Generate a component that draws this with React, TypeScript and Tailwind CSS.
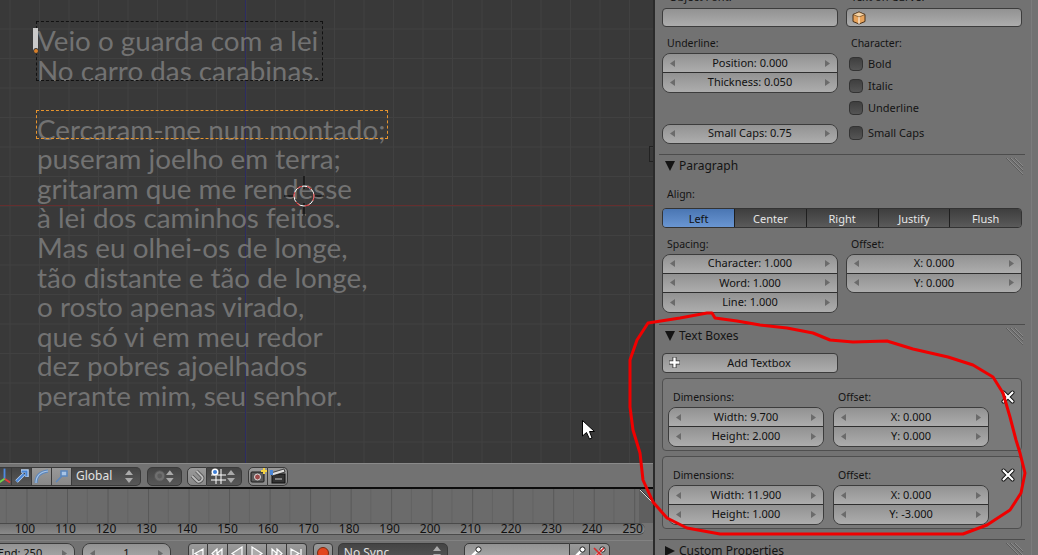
const poem = [
  "Veio o guarda com a lei",
  "No carro das carabinas.",
  "\u00a0",
  "Cercaram-me num montado;",
  "puseram joelho em terra;",
  "gritaram que me rendesse",
  "à lei dos caminhos feitos.",
  "Mas eu olhei-os de longe,",
  "tão distante e tão de longe,",
  "o rosto apenas virado,",
  "que só vi em meu redor",
  "dez pobres ajoelhados",
  "perante mim, seu senhor.",
];

const frames = [100, 110, 120, 130, 140, 150, 160, 170, 180, 190, 200, 210, 220, 230, 240, 250];

const scribble =
  "M712 313L715 318L737 321L760 325L787 328L813 333L830 340L853 342L887 341L913 349L948 357L973 365L993 377L1003 393L1010 417L1016 440L1020 453L1025 473L1021 493L1010 510L987 525L963 534L887 534L787 534L720 534L687 528L667 518L653 502L643 480L640 453L633 430L630 407L630 360L637 340L648 323L680 318L707 313Z";

function Arrow({ dir }: { dir: "l" | "r" }) {
  return (
    <svg width="5" height="7" viewBox="0 0 5 7" className="shrink-0">
      <polygon points={dir === "l" ? "5,0 5,7 0,3.5" : "0,0 0,7 5,3.5"} fill="#6b6b6b" />
    </svg>
  );
}

function NumStack({ rows }: { rows: string[] }) {
  return (
    <div className="rounded-[8px] border border-[#3c3c3c] overflow-hidden">
      {rows.map((r, i) => (
        <div
          key={r}
          className={`flex items-center justify-between px-[7px] bg-linear-to-b from-[#929292] to-[#adadad] ${
            i > 0 ? "h-[19.5px] border-t border-[#2e2e2e]" : "h-[18px]"
          }`}
        >
          <Arrow dir="l" />
          <span className="text-[#111]">{r}</span>
          <Arrow dir="r" />
        </div>
      ))}
    </div>
  );
}

function Label({ children, className }: { children: string; className: string }) {
  return <div className={`leading-[14px] pl-[5px] text-[10.5px] text-[#141414] ${className}`}>{children}</div>;
}

function Check({ label, className }: { label: string; className: string }) {
  return (
    <div className={`h-[14px] flex items-center pl-[3px] ${className}`}>
      <span className="w-[14px] h-[14px] rounded-[4px] border border-[#333] bg-linear-to-b from-[#3f3f3f] to-[#555]" />
      <span className="ml-[5px] pt-[1px] text-[#141414]">{label}</span>
    </div>
  );
}

function Grip() {
  return (
    <svg width="17" height="17" viewBox="0 0 17 17" className="absolute right-[2px] top-[3px]">
      {[0, 4, 8].map((d) => (
        <g key={d}>
          <line x1={d} y1="0" x2="17" y2={17 - d} stroke="#5c5c5c" />
          <line x1={d + 1} y1="0" x2="17" y2={16 - d} stroke="#8a8a8a" />
        </g>
      ))}
    </svg>
  );
}

function PanelHeader({ title, open = true, className }: { title: string; open?: boolean; className: string }) {
  return (
    <div className={`relative -mx-[3px] h-[23px] border-t border-[#4c4c4c] flex items-center pl-[6px] ${className}`}>
      <svg width="10" height="10" viewBox="0 0 10 10">
        {open ? <polygon points="0,0 10,0 5,10" fill="#141414" /> : <polygon points="0,0 10,5 0,10" fill="#141414" />}
      </svg>
      <span className="ml-[4px] text-[12px] text-[#141414]">{title}</span>
      <Grip />
    </div>
  );
}

function CloseX() {
  return (
    <svg width="14" height="14" viewBox="0 0 14 14" className="ml-[12px] shrink-0">
      <path d="M2.5 2.5L11.5 11.5M11.5 2.5L2.5 11.5" stroke="#111" strokeWidth="4" strokeLinecap="round" />
      <path d="M2.5 2.5L11.5 11.5M11.5 2.5L2.5 11.5" stroke="#fff" strokeWidth="2.2" strokeLinecap="round" />
    </svg>
  );
}

function TextBoxCard({ w, h, y }: { w: string; h: string; y: string }) {
  return (
    <div className="h-[73px] mt-[5px] rounded-[4px] border border-[#4f4f4f] bg-[#797979] px-[5px] pt-[11px] flex">
      <div className="w-[156px]">
        <Label className="h-[17px]">Dimensions:</Label>
        <NumStack rows={[`Width: ${w}`, `Height: ${h}`]} />
      </div>
      <div className="w-[156px] ml-[9px]">
        <Label className="h-[17px]">Offset:</Label>
        <NumStack rows={["X: 0.000", `Y: ${y}`]} />
      </div>
      <CloseX />
    </div>
  );
}

function ToolBtn({
  light,
  className = "",
  children,
}: {
  light?: boolean;
  className?: string;
  children?: React.ReactNode;
}) {
  return (
    <div
      className={`h-[19px] flex items-center border-y border-r border-[#3a3a3a] ${
        light ? "bg-linear-to-b from-[#999] to-[#888]" : "bg-linear-to-b from-[#444] to-[#585858]"
      } ${className}`}
    >
      {children}
    </div>
  );
}

function UpDown() {
  return (
    <svg width="8" height="13" viewBox="0 0 8 13">
      <polygon points="4,0 8,5 0,5" fill="#aaa" />
      <polygon points="0,8 8,8 4,13" fill="#aaa" />
    </svg>
  );
}

function Transport({ d }: { d: string }) {
  return (
    <ToolBtn light className="w-[19.8px] justify-center first:rounded-l-[4px] first:border-l last:rounded-r-[4px]">
      <svg width="14" height="14" viewBox="0 0 14 14">
        <path d={d} fill="#aaa" stroke="#fff" strokeWidth="1.2" />
      </svg>
    </ToolBtn>
  );
}

function Wrench() {
  return (
    <svg width="14" height="14" viewBox="0 0 14 14">
      <path d="M1 13L3 11L9 5" stroke="#fff" strokeWidth="2.5" />
      <circle cx="10.5" cy="3.5" r="2.6" fill="#fff" stroke="#222" />
      <path d="M1 13L3 11" stroke="#222" strokeWidth="1" />
    </svg>
  );
}

export default function App() {
  return (
    <div className="relative w-[1038px] h-[555px] overflow-hidden flex bg-[#727272] font-['Noto_Sans',sans-serif] text-[11px]">
      {/* left side: viewport and timeline */}
      <div className="w-[653px] shrink-0 flex flex-col">
        <div className="relative h-[463px] overflow-hidden bg-[#393939] bg-[linear-gradient(#414141_1px,transparent_1px),linear-gradient(90deg,#414141_1px,transparent_1px)] bg-size-[29.5px_29.5px] bg-position-[9.5px_28.5px]">
          <div className="absolute left-[245px] top-0 bottom-0 w-px bg-[#2c2c63]" />
          <div className="absolute left-0 right-0 top-[205px] h-px bg-[#652e2e]" />

          <div className="relative pl-[37px] pt-[26px] font-['Lato',sans-serif] text-[27.8px] leading-[29.58px] text-[#727272] whitespace-nowrap">
            {poem.map((line) => (
              <div key={line}>{line}</div>
            ))}
          </div>

          {/* text boxes and cursors on the canvas */}
          <div className="absolute left-[36px] top-[21px] w-[287px] h-[60px] border border-dashed border-[#111]" />
          <div className="absolute left-[36px] top-[110px] w-[352px] h-[29px] border border-dashed border-[#e8952e]" />
          <div className="absolute left-[33px] top-[28px] w-[5px] h-[23px] bg-[#c9c9c9]" />
          <div className="absolute left-[33px] top-[48px] w-[6px] h-[6px] rounded-full bg-[#d9802a] border border-[#333]" />
          <div className="absolute left-[649px] top-[146px] w-[6px] h-[16px] border border-[#222]" />
          <svg width="42" height="42" viewBox="0 0 42 42" className="absolute left-[283px] top-[175px]">
            <path d="M21 1V14M21 28V41M1 21H11M31 21H41" stroke="#000" />
            <circle cx="21" cy="21" r="10" fill="none" stroke="#fff" />
            <circle cx="21" cy="21" r="10" fill="none" stroke="#d32222" strokeDasharray="5 5" />
          </svg>
          <svg width="16" height="22" viewBox="0 0 16 22" className="absolute left-[581px] top-[419px]">
            <path d="M1.5 1.5V17L5.5 13.5L8.5 20L11 19L8.5 12.5L13.5 12.5Z" fill="#fff" stroke="#000" />
          </svg>
        </div>

        {/* 3d view header */}
        <div className="h-[26px] shrink-0 border-t border-[#8a8a8a] border-b-2 border-b-[#0c0c0c] bg-[#727272] flex items-center pt-[1px]">
          <ToolBtn className="w-[20px] -ml-[8px] pl-[6px] justify-center">
            <svg width="14" height="17" viewBox="0 0 14 17">
              <path d="M7 0V11" stroke="#4f8ae0" strokeWidth="2" />
              <path d="M7 11L13 15" stroke="#e23a3a" strokeWidth="2" />
              <path d="M7 11L1 15" stroke="#6fd34a" strokeWidth="2" />
            </svg>
          </ToolBtn>
          <ToolBtn className="w-[20px] justify-center">
            <svg width="14" height="14" viewBox="0 0 14 14">
              <path d="M1.5 12.5L9 5M6 2H12V8" fill="none" stroke="#bcd4f2" strokeWidth="3.5" />
              <path d="M1.5 12.5L9 5M6.5 2.5H11.5V7.5" fill="none" stroke="#4a86d6" strokeWidth="2" />
            </svg>
          </ToolBtn>
          <ToolBtn light className="w-[20px] justify-center">
            <svg width="15" height="15" viewBox="0 0 15 15">
              <path d="M2 14C2 7 6 3 14 2" fill="none" stroke="#5b87bd" strokeWidth="3" />
              <path d="M2 14C2 7 6 3 14 2" fill="none" stroke="#a8c4e6" strokeWidth="1.2" />
            </svg>
          </ToolBtn>
          <ToolBtn light className="w-[20px] justify-center">
            <svg width="15" height="15" viewBox="0 0 15 15">
              <path d="M2 13L8 7M7 2H13V7H7Z" fill="#a8c4e6" stroke="#5b87bd" strokeWidth="1.6" />
            </svg>
          </ToolBtn>
          <ToolBtn className="w-[69px] rounded-r-[5px] justify-between pl-[4px] pr-[7px]">
            <span className="text-[#e2e2e2] text-[12px]">Global</span>
            <UpDown />
          </ToolBtn>

          <ToolBtn className="w-[35px] ml-[6px] rounded-[5px] border-l justify-between pl-[5px] pr-[7px]">
            <svg width="14" height="14" viewBox="0 0 14 14">
              <circle cx="7" cy="7" r="5.5" fill="#6f6f6f" stroke="#555" />
              <circle cx="7" cy="7" r="2.5" fill="#5c5c5c" />
            </svg>
            <UpDown />
          </ToolBtn>

          <ToolBtn light className="w-[20px] ml-[5px] rounded-l-[5px] border-l justify-center">
            <svg width="16" height="16" viewBox="0 0 16 16">
              <path d="M3 8L8.5 13.5C11 15 15 11 13 8.5L7.5 3" fill="none" stroke="#555" strokeWidth="3.5" />
              <path d="M3 8L8.5 13.5C11 15 15 11 13 8.5L7.5 3" fill="none" stroke="#bdbdbd" strokeWidth="1.8" />
            </svg>
          </ToolBtn>
          <ToolBtn className="w-[35px] rounded-r-[5px] justify-between pl-[3px] pr-[6px]">
            <svg width="17" height="17" viewBox="0 0 17 17">
              <path d="M1 12H16M1 7H16M11 1V16M6 8V16" stroke="#fff" />
              <circle cx="5" cy="4" r="3.5" fill="#fff" />
              <circle cx="5" cy="4" r="2" fill="#3d7fd9" />
            </svg>
            <UpDown />
          </ToolBtn>

          <ToolBtn light className="w-[20px] ml-[6px] rounded-l-[5px] border-l justify-center">
            <svg width="17" height="16" viewBox="0 0 17 16">
              <rect x="1" y="4" width="13" height="10" rx="1" fill="#5a5a5a" stroke="#1a1a1a" />
              <circle cx="7.5" cy="9" r="3" fill="#9b4a4a" stroke="#ddd" />
              <path d="M14 0V6M11 3H17" stroke="#f5d442" strokeWidth="2" />
            </svg>
          </ToolBtn>
          <ToolBtn light className="w-[20px] rounded-r-[5px] justify-center">
            <svg width="16" height="16" viewBox="0 0 16 16">
              <rect x="2" y="6" width="13" height="9" fill="#333" stroke="#111" />
              <path d="M1 5L14 1L15 4L2 8Z" fill="#ddd" stroke="#111" strokeWidth="0.7" />
              <path d="M5 11H12" stroke="#ccc" />
              <rect x="0" y="2" width="3" height="5" fill="#4a86d6" />
            </svg>
          </ToolBtn>
        </div>

        {/* timeline */}
        <div className="relative h-[34px] shrink-0 bg-[#6b6b6b] bg-[linear-gradient(90deg,#585858_1px,transparent_1px),linear-gradient(90deg,transparent_20px,#626262_20px,#626262_21px,transparent_21px)] bg-size-[40.53px_100%] bg-position-[26.5px_0]">
          <div className="absolute right-0 top-0 bottom-0 w-[14px] bg-[#5f5f5f]" />
          <svg width="14" height="14" viewBox="0 0 14 14" className="absolute right-0 top-0">
            <path d="M1 1L13 13" stroke="#ddd" />
            <path d="M1 0L14 13" stroke="#333" />
          </svg>
        </div>
        <div className="h-[12px] shrink-0 rounded-r-[7px] mr-[8px] border-y border-[#4a4a4a] bg-linear-to-b from-[#6f6f6f] to-[#8a8a8a] flex items-center pl-[4.7px] text-[12px] text-[#111]">
          {frames.map((f) => (
            <span key={f} className="w-[40.53px] shrink-0 text-center">
              {f}
            </span>
          ))}
        </div>

        {/* timeline footer */}
        <div className="mt-[5px] flex-1 border-t border-[#828282] pt-[2px] flex items-start overflow-hidden">
          <div className="w-[110px] -ml-[35px] shrink-0">
            <NumStack rows={["End: 250"]} />
          </div>
          <div className="w-[89px] ml-[7px] shrink-0">
            <NumStack rows={["1"]} />
          </div>
          <div className="ml-[17px] flex shrink-0">
            <Transport d="M2 3V12M12 3L4 7.5L12 12Z" />
            <Transport d="M7 3L2 7.5L7 12ZM12 3L7 7.5L12 12Z" />
            <Transport d="M12 1L2 7.5L12 14Z" />
            <Transport d="M2 1L12 7.5L2 14Z" />
            <Transport d="M2 3L7 7.5L2 12ZM7 3L12 7.5L7 12Z" />
            <Transport d="M12 3V12M2 3L10 7.5L2 12Z" />
          </div>
          <ToolBtn light className="w-[20px] ml-[6px] rounded-[4px] border-l shrink-0 justify-center">
            <span className="w-[12px] h-[12px] rounded-full bg-[#e2451d] border border-[#7a2a10]" />
          </ToolBtn>
          <ToolBtn className="w-[110px] ml-[5px] rounded-[5px] border-l justify-between pl-[5px] pr-[6px] shrink-0">
            <span className="text-[#e2e2e2] text-[12px]">No Sync</span>
            <UpDown />
          </ToolBtn>
          <div className="ml-[16px] w-[106px] h-[19px] rounded-l-[5px] border border-[#3a3a3a] bg-linear-to-b from-[#929292] to-[#adadad] pl-[3px] pt-[2px] shrink-0">
            <Wrench />
          </div>
          <ToolBtn light className="w-[20px] shrink-0 justify-center">
            <Wrench />
          </ToolBtn>
          <ToolBtn light className="relative w-[20px] shrink-0 justify-center rounded-r-[5px]">
            <Wrench />
            <svg width="14" height="14" viewBox="0 0 14 14" className="absolute left-[2px] top-[2px]">
              <path d="M2 2L12 12M12 2L2 12" stroke="#d62a2a" strokeWidth="1.6" />
            </svg>
          </ToolBtn>
        </div>
      </div>

      {/* properties panel */}
      <div className="relative w-[385px] shrink-0 border-l-2 border-[#2b2b2b] bg-[#727272]">
        <div className="ml-[7px] w-[360px] -mt-[7px]">
          <div className="flex gap-x-[8px]">
            <div className="w-[176px]">
              <div className="h-[15px] pl-[7px] leading-[8px] text-[#141414]">Object Font:</div>
              <div className="h-[19px] rounded-[4px] border border-[#3c3c3c] bg-linear-to-b from-[#929292] to-[#adadad]" />
            </div>
            <div className="w-[176px]">
              <div className="h-[15px] pl-[5px] leading-[8px] text-[#141414]">Text on Curve:</div>
              <div className="h-[19px] rounded-[4px] border border-[#3c3c3c] bg-linear-to-b from-[#929292] to-[#adadad] pl-[5px] pt-[2px]">
                <svg width="14" height="14" viewBox="0 0 14 14">
                  <path d="M7 1L13 3.5V10.5L7 13L1 10.5V3.5Z" fill="#e8a35a" stroke="#4a3018" />
                  <path d="M1 3.5L7 6L13 3.5L7 1Z" fill="#f7d2a2" stroke="#4a3018" strokeWidth="0.6" />
                  <path d="M7 6V13" stroke="#fff" />
                </svg>
              </div>
            </div>
          </div>

          <div className="flex gap-x-[8px] mt-[9px]">
            <div className="w-[176px]">
              <Label className="h-[17px]">Underline:</Label>
              <NumStack rows={["Position: 0.000", "Thickness: 0.050"]} />
              <div className="mt-[31px]">
                <NumStack rows={["Small Caps: 0.75"]} />
              </div>
            </div>
            <div className="w-[176px]">
              <Label className="h-[19px]">Character:</Label>
              <Check label="Bold" className="mt-[2px]" />
              <Check label="Italic" className="mt-[8px]" />
              <Check label="Underline" className="mt-[8px]" />
              <Check label="Small Caps" className="mt-[11px]" />
            </div>
          </div>

          <PanelHeader title="Paragraph" className="mt-[10px]" />
          <Label className="h-[14px] mt-[10.5px]">Align:</Label>
          <div className="mt-[7px] h-[20px] flex rounded-[4px] border border-[#333] overflow-hidden text-[#e6e6e6] text-center leading-[19px]">
            <div className="w-[71px] bg-linear-to-b from-[#4a76b3] to-[#6a96d2] text-[#111]">Left</div>
            {["Center", "Right", "Justify", "Flush"].map((t) => (
              <div key={t} className="flex-1 border-l border-[#1f1f1f] bg-linear-to-b from-[#3e3e3e] to-[#5a5a5a]">
                {t}
              </div>
            ))}
          </div>

          <div className="flex gap-x-[8px] mt-[9px]">
            <div className="w-[176px]">
              <Label className="h-[16.5px]">Spacing:</Label>
              <NumStack rows={["Character: 1.000", "Word: 1.000", "Line: 1.000"]} />
            </div>
            <div className="w-[176px]">
              <Label className="h-[16.5px]">Offset:</Label>
              <NumStack rows={["X: 0.000", "Y: 0.000"]} />
            </div>
          </div>

          <PanelHeader title="Text Boxes" className="mt-[11px]" />
          <div className="w-[176px] h-[20px] mt-[6.5px] pl-[18px] pt-[1px] rounded-[4px] border border-[#3c3c3c] bg-linear-to-b from-[#929292] to-[#adadad] relative flex items-center justify-center text-[#111]">
            <svg width="13" height="13" viewBox="0 0 13 13" className="absolute left-[5px] top-[2px]">
              <path d="M6.5 1V12M1 6.5H12" stroke="#333" strokeWidth="4" />
              <path d="M6.5 1.5V11.5M1.5 6.5H11.5" stroke="#fff" strokeWidth="2.4" />
            </svg>
            Add Textbox
          </div>
          <TextBoxCard w="9.700" h="2.000" y="0.000" />
          <TextBoxCard w="11.900" h="1.000" y="-3.000" />
          <PanelHeader title="Custom Properties" open={false} className="mt-[10px]" />
        </div>
        <div className="absolute right-0 top-0 bottom-0 w-[7px] border-l border-[#7c7c7c]" />
      </div>

      {/* red marker drawn over the screenshot */}
      <svg width="1038" height="555" viewBox="0 0 1038 555" className="absolute left-0 top-0 pointer-events-none">
        <path d={scribble} fill="none" stroke="#f00000" strokeWidth="3" strokeLinejoin="round" />
      </svg>
    </div>
  );
}
